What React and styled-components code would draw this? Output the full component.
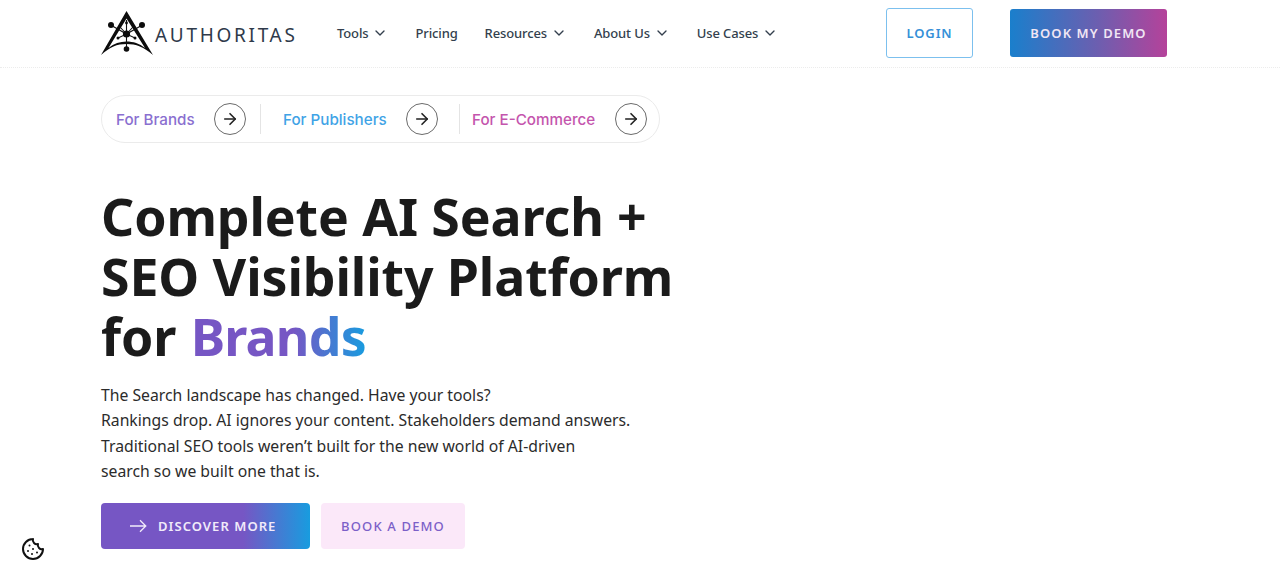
import React from 'react';
import styled, { createGlobalStyle } from 'styled-components';
import { ChevronDown, ArrowRight, Cookie } from 'lucide-react';

const GlobalStyle = createGlobalStyle`
  html, body {
    margin: 0;
    padding: 0;
    background: #fff;
    font-family: "Noto Sans", sans-serif;
    overflow: hidden;
  }
  * { box-sizing: border-box; }
`;

const Page = styled.div`
  width: 1280px;
  height: 569px;
  position: relative;
  overflow: hidden;
`;

const Header = styled.header`
  height: 68px;
  padding: 8px 113px 0 100px;
  display: flex;
  align-items: flex-start;
  border-bottom: 1px dotted #ececec;
`;

const Brand = styled.a`
  display: flex;
  align-items: center;
  width: 237px;
  height: 50px;
  gap: 1px;
`;

const BrandName = styled.span`
  font-size: 19px;
  letter-spacing: 2.7px;
  color: #2f3a4a;
  margin-top: 3px;
`;

const Nav = styled.nav`
  display: flex;
  align-items: center;
  height: 50px;
  gap: 27px;
`;

const NavItem = styled.a`
  display: flex;
  align-items: center;
  gap: 4px;
  font-size: 13px;
  font-weight: 500;
  letter-spacing: -0.13px;
  color: #333f4d;
`;

const HeaderActions = styled.div`
  margin-left: auto;
  display: flex;
  align-items: center;
  gap: 37px;
`;

const LoginButton = styled.a`
  width: 87px;
  height: 50px;
  display: flex;
  align-items: center;
  justify-content: center;
  border: 1px solid #7cc0ee;
  border-radius: 3px;
  color: #3590d8;
  font-size: 13px;
  font-weight: 600;
  letter-spacing: 0.9px;
`;

const DemoButton = styled.a`
  width: 157px;
  height: 48px;
  display: flex;
  align-items: center;
  justify-content: center;
  border-radius: 3px;
  background: linear-gradient(90deg, #1a7fcc 0%, #6b5fb0 55%, #b5429a 100%);
  color: #f0e6f4;
  font-size: 13px;
  font-weight: 600;
  letter-spacing: 1.1px;
`;

const Main = styled.main`
  padding: 27px 0 0 101px;
`;

const AudiencePill = styled.div`
  width: 559px;
  height: 48px;
  display: flex;
  align-items: center;
  border: 1px solid #ebebeb;
  border-radius: 24px;
  padding: 0 12px 0 14px;
`;

const AudienceItem = styled.a`
  display: flex;
  align-items: center;
  justify-content: space-between;
  flex: ${(p) => p.$flex};
  font-family: Inter, sans-serif;
  font-size: 15.2px;
  font-weight: 500;
  color: ${(p) => p.$color};
`;

const ArrowCircle = styled.span`
  width: 32px;
  height: 32px;
  flex: none;
  display: flex;
  align-items: center;
  justify-content: center;
  border: 1px solid #6b6b6b;
  border-radius: 50%;
  color: #222;
`;

const Separator = styled.span`
  width: 1px;
  height: 30px;
  flex: none;
  background: #e4e4e4;
  margin: 0 ${(p) => p.$right}px 0 ${(p) => p.$left}px;
`;

const Headline = styled.h1`
  margin: 43px 0 0;
  font-size: 51.8px;
  line-height: 60px;
  font-weight: 700;
  letter-spacing: -0.1px;
  color: #1b1b1b;
  white-space: nowrap;
`;

const GradientWord = styled.span`
  background: linear-gradient(90deg, #7656c4 0%, #7656c4 58%, #189cdf 100%);
  -webkit-background-clip: text;
  background-clip: text;
  color: transparent;
  letter-spacing: -0.8px;
  margin-left: 1px;
`;

const Lead = styled.p`
  margin: 17px 0 0;
  font-size: 15.75px;
  line-height: 25.4px;
  font-weight: 400;
  color: #2b2b2b;
  white-space: nowrap;
`;

const Actions = styled.div`
  margin-top: 18px;
  display: flex;
  gap: 11px;
`;

const DiscoverButton = styled.a`
  width: 209px;
  height: 46px;
  display: flex;
  align-items: center;
  gap: 11px;
  padding-left: 29px;
  border-radius: 4px;
  background: linear-gradient(90deg, #7656c4 0%, #7656c4 68%, #189cdf 100%);
  color: #f1ebfa;
  font-size: 13px;
  font-weight: 600;
  letter-spacing: 1.05px;
`;

const SoftButton = styled.a`
  width: 144px;
  height: 46px;
  display: flex;
  align-items: center;
  justify-content: center;
  border-radius: 4px;
  background: #fbe8f9;
  color: #7c5fc8;
  font-size: 13px;
  font-weight: 500;
  letter-spacing: 1.15px;
`;

const CookieBadge = styled.span`
  position: absolute;
  left: 21px;
  top: 537px;
  display: flex;
  color: #111;
`;

const LogoMark = () => (
  <svg width="54" height="46" viewBox="0 0 54 46" fill="none">
    <path d="M26.5 1 L53 45 C44 37 36 34 26.5 34 C17 34 10 37 1 45 Z M26.5 8.5 L8.5 38 C14 33.5 20 31.5 26.5 31.5 C33 31.5 39.5 33.5 45 38 Z" fill="#0c0c0c" fillRule="evenodd" />
    <g stroke="#111" strokeWidth="1.1">
      <path d="M26.5 10 V39" />
      <path d="M11.5 15.5 L26.5 24 L41.5 15.5" />
      <path d="M18 28 L26.5 24 L35 28" />
      <path d="M20 17 L26.5 24 L33 17" />
    </g>
    <circle cx="26.5" cy="24" r="3.6" fill="#0c0c0c" />
    <circle cx="26.5" cy="13" r="1.4" fill="#0c0c0c" />
    <circle cx="11" cy="15" r="3" fill="#0c0c0c" />
    <circle cx="42" cy="15" r="3" fill="#0c0c0c" />
    <circle cx="18" cy="28" r="1.5" fill="#0c0c0c" />
    <circle cx="35" cy="28" r="1.5" fill="#0c0c0c" />
    <circle cx="26.5" cy="39" r="2.8" fill="#0c0c0c" />
  </svg>
);

const LongArrow = () => (
  <svg width="17" height="14" viewBox="0 0 17 14" fill="none" stroke="currentColor" strokeWidth="1.3">
    <path d="M0 7h15.5M10 1.2 15.8 7 10 12.8" />
  </svg>
);

const navItems = [
  { label: 'Tools', menu: true },
  { label: 'Pricing', menu: false },
  { label: 'Resources', menu: true },
  { label: 'About Us', menu: true },
  { label: 'Use Cases', menu: true },
];

export default function App() {
  return (
    <Page>
      <GlobalStyle />
      <Header>
        <Brand>
          <LogoMark />
          <BrandName>AUTHORITAS</BrandName>
        </Brand>
        <Nav>
          {navItems.map((item) => (
            <NavItem key={item.label}>
              {item.label}
              {item.menu && <ChevronDown size={16} strokeWidth={2} />}
            </NavItem>
          ))}
        </Nav>
        <HeaderActions>
          <LoginButton>LOGIN</LoginButton>
          <DemoButton>BOOK MY DEMO</DemoButton>
        </HeaderActions>
      </Header>
      <Main>
        <AudiencePill>
          <AudienceItem $flex="0 0 130px" $color="#8a6fd0">
            For Brands
            <ArrowCircle><ArrowRight size={18} strokeWidth={2.2} /></ArrowCircle>
          </AudienceItem>
          <Separator $left={14} $right={22} />
          <AudienceItem $flex="0 0 155px" $color="#3fa3e6">
            For Publishers
            <ArrowCircle><ArrowRight size={18} strokeWidth={2.2} /></ArrowCircle>
          </AudienceItem>
          <Separator $left={21} $right={12} />
          <AudienceItem $flex="1" $color="#c455ad">
            For E-Commerce
            <ArrowCircle><ArrowRight size={18} strokeWidth={2.2} /></ArrowCircle>
          </AudienceItem>
        </AudiencePill>
        <Headline>
          Complete AI Search +<br />
          SEO Visibility Platform<br />
          for <GradientWord>Brands</GradientWord>
        </Headline>
        <Lead>
          The Search landscape has changed. Have your tools?<br />
          Rankings drop. AI ignores your content. Stakeholders demand answers.<br />
          Traditional SEO tools weren’t built for the new world of AI-driven<br />
          search so we built one that is.
        </Lead>
        <Actions>
          <DiscoverButton>
            <LongArrow />
            DISCOVER MORE
          </DiscoverButton>
          <SoftButton>BOOK A DEMO</SoftButton>
        </Actions>
      </Main>
      <CookieBadge><Cookie size={24} strokeWidth={2} /></CookieBadge>
    </Page>
  );
}
